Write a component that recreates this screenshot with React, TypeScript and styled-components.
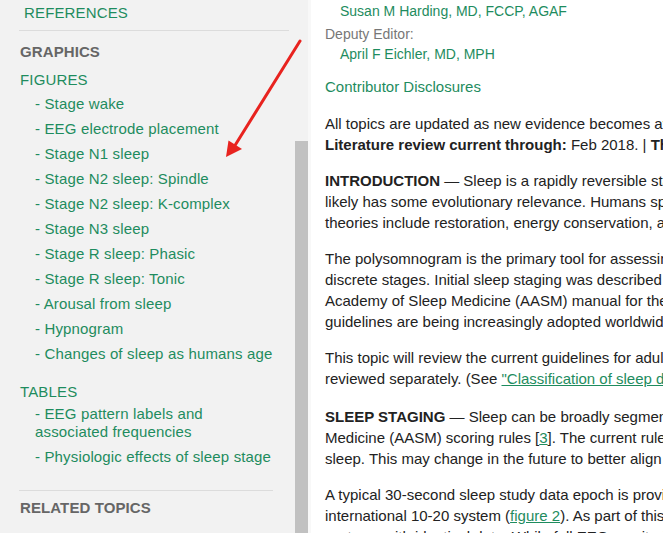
import React from 'react'
import styled, { createGlobalStyle } from 'styled-components'

const green = '#1e8c5e'
const sideBg = '#f2f2f2'

const GlobalStyle = createGlobalStyle`
  html, body {
    margin: 0;
    padding: 0;
    background: #fff;
    overflow: hidden;
  }
  body {
    font-family: "Liberation Sans", Arial, sans-serif;
  }
`

const Page = styled.div`
  position: relative;
  display: flex;
  width: 663px;
  height: 533px;
  overflow: hidden;
`

const Sidebar = styled.aside`
  display: flex;
  width: 308px;
  flex-shrink: 0;
  background: ${sideBg};
  border-right: 3px solid #f8f8f8;
`

const Nav = styled.nav`
  flex: 1;
  padding-left: 20px;
  font-size: 15px;
  letter-spacing: 0.15px;
`

const TopLink = styled.div`
  line-height: 20px;
  padding: 3px 0 0 4px;
  color: ${green};
`

const Divider = styled.div<{ $width: number; $top: number; $bottom: number }>`
  width: ${(p) => p.$width}px;
  height: 1px;
  background: #dcdcdc;
  margin: ${(p) => p.$top}px 0 ${(p) => p.$bottom}px -1px;
`

const SectionTitle = styled.div`
  line-height: 20px;
  font-weight: bold;
  color: #666;
  letter-spacing: 0.1px;
`

const GroupTitle = styled.div<{ $top: number }>`
  line-height: 20px;
  margin-top: ${(p) => p.$top}px;
  color: ${green};
`

const ItemList = styled.ul<{ $top: number }>`
  list-style: none;
  margin: ${(p) => p.$top}px 0 0;
  padding: 0;
`

const Item = styled.li`
  padding: 3.5px 20px 3.5px 15px;
  line-height: 18px;
  color: ${green};
`

const ScrollTrack = styled.div`
  display: flex;
  flex-direction: column;
  width: 13px;
  padding-top: 141px;
`

const Thumb = styled.div`
  flex: 1;
  background: #c1c1c1;
`

const Main = styled.main`
  flex: 1;
  min-width: 0;
  overflow: hidden;
  padding-left: 14px;
  font-size: 15px;
  color: #222;
`

const Inner = styled.div`
  width: 900px;
  white-space: nowrap;
`

const Byline = styled.div<{ $indent?: boolean; $muted?: boolean; $top?: number }>`
  line-height: 20px;
  font-size: 14px;
  padding-left: ${(p) => (p.$indent ? 15 : 0)}px;
  margin-top: ${(p) => p.$top ?? 0}px;
  color: ${(p) => (p.$muted ? '#777' : green)};
`

const Disclosures = styled.div`
  line-height: 20px;
  margin-top: 13px;
  color: ${green};
`

const Para = styled.p<{ $top?: number }>`
  margin: ${(p) => p.$top ?? 15}px 0 0;
  line-height: 21px;
`

const Link = styled.a`
  color: ${green};
  text-decoration: underline;
`

const Arrow = styled.svg`
  position: absolute;
  left: 0;
  top: 0;
  pointer-events: none;
`

const figures = [
  'Stage wake',
  'EEG electrode placement',
  'Stage N1 sleep',
  'Stage N2 sleep: Spindle',
  'Stage N2 sleep: K-complex',
  'Stage N3 sleep',
  'Stage R sleep: Phasic',
  'Stage R sleep: Tonic',
  'Arousal from sleep',
  'Hypnogram',
  'Changes of sleep as humans age',
]

const tables = ['EEG pattern labels and associated frequencies', 'Physiologic effects of sleep stage']

export default function App() {
  return (
    <Page>
      <GlobalStyle />
      <Sidebar>
        <Nav>
          <TopLink>REFERENCES</TopLink>
          <Divider $width={270} $top={7} $bottom={11} />
          <SectionTitle>GRAPHICS</SectionTitle>
          <GroupTitle $top={8}>FIGURES</GroupTitle>
          <ItemList $top={1.5}>
            {figures.map((f) => (
              <Item key={f}>- {f}</Item>
            ))}
          </ItemList>
          <GroupTitle $top={15.5}>TABLES</GroupTitle>
          <ItemList $top={-1}>
            {tables.map((t) => (
              <Item key={t}>- {t}</Item>
            ))}
          </ItemList>
          <Divider $width={254} $top={20.5} $bottom={7} />
          <SectionTitle>RELATED TOPICS</SectionTitle>
        </Nav>
        <ScrollTrack>
          <Thumb />
        </ScrollTrack>
      </Sidebar>
      <Main>
        <Inner>
          <Byline $indent $top={1}>Susan M Harding, MD, FCCP, AGAF</Byline>
          <Byline $muted $top={3}>Deputy Editor:</Byline>
          <Byline $indent>April F Eichler, MD, MPH</Byline>
          <Disclosures>Contributor Disclosures</Disclosures>
          <Para $top={15.5}>
            All topics are updated as new evidence becomes available and our peer review process is complete.
            <br />
            <b>Literature review current through:</b> Feb 2018. | <b>This topic last updated:</b> Mar 09, 2017.
          </Para>
          <Para>
            <b>INTRODUCTION</b> — Sleep is a rapidly reversible state of reduced responsiveness, motor activity, and metabolism.
            <br />
            likely has some evolutionary relevance. Humans spend approximately one-third of their lives asleep.
            <br />
            theories include restoration, energy conservation, and memory consolidation.
          </Para>
          <Para>
            The polysomnogram is the primary tool for assessing sleep, and it allows sleep to be divided into
            <br />
            discrete stages. Initial sleep staging was described by Rechtschaffen and Kales in 1968. The American
            <br />
            Academy of Sleep Medicine (AASM) manual for the scoring of sleep and associated events
            <br />
            guidelines are being increasingly adopted worldwide.
          </Para>
          <Para>
            This topic will review the current guidelines for adult sleep staging. Sleep staging in children is
            <br />
            reviewed separately. (See <Link>"Classification of sleep disorders"</Link>.)
          </Para>
          <Para $top={17}>
            <b>SLEEP STAGING</b> — Sleep can be broadly segmented into stages according to the American Academy of Sleep
            <br />
            Medicine (AASM) scoring rules [<Link>3</Link>]. The current rules divide sleep into wake, N1, N2, N3, and R
            <br />
            sleep. This may change in the future to better align with new data.
          </Para>
          <Para>
            A typical 30-second sleep study data epoch is provided with electrodes placed according to the
            <br />
            international 10-20 system (<Link>figure 2</Link>). As part of this, the EEG is recorded
            <br />
            systems with identical data. While full EEG monitoring is standard
          </Para>
        </Inner>
      </Main>
      <Arrow width={663} height={533} viewBox="0 0 663 533">
        <line x1={300} y1={41} x2={234} y2={147} stroke="#e8231f" strokeWidth={3} strokeLinecap="round" />
        <polygon points="226,157 228.5,140.5 242,149" fill="#e8231f" />
      </Arrow>
    </Page>
  )
}
